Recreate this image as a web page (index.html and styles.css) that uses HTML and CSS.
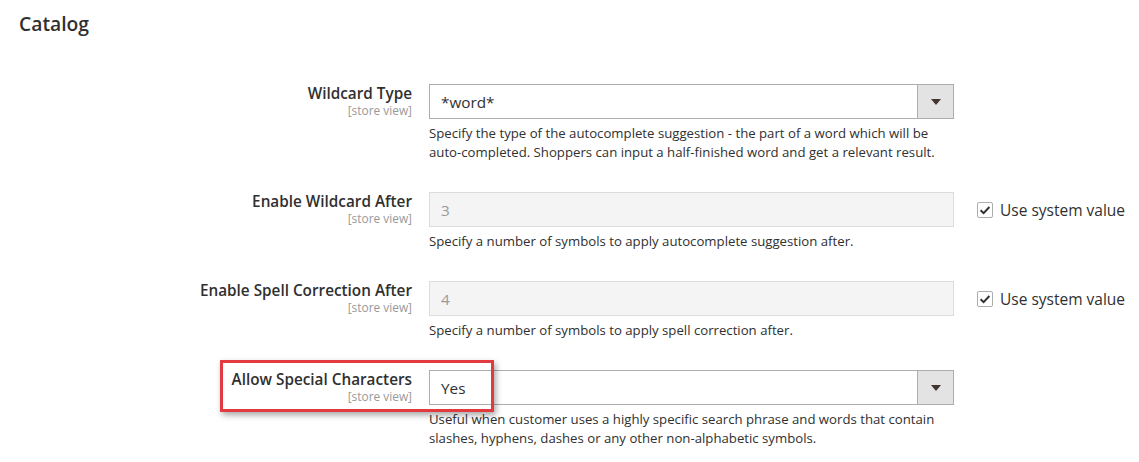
FILE: index.html
```html
<!DOCTYPE html>
<html lang="en">
<head>
<meta charset="utf-8">
<title>Catalog</title>
<link rel="stylesheet" href="styles.css">
</head>
<body>
<div class="page">
  <h2 class="title">Catalog</h2>
  <div class="form">
    <div class="row">
      <div class="label"><span class="name">Wildcard Type</span><span class="scope">[store view]</span></div>
      <div class="control">
        <div class="select"><span class="value">*word*</span><span class="arrow"><span class="tri"></span></span></div>
        <p class="note">Specify the type of the autocomplete suggestion - the part of a word which will be auto-completed. Shoppers can input a half-finished word and get a relevant result.</p>
      </div>
      <div class="extra"></div>
    </div>
    <div class="row">
      <div class="label"><span class="name">Enable Wildcard After</span><span class="scope">[store view]</span></div>
      <div class="control">
        <div class="input disabled"><span class="value">3</span></div>
        <p class="note">Specify a number of symbols to apply autocomplete suggestion after.</p>
      </div>
      <div class="extra">
        <span class="checkbox"><svg viewBox="0 0 16 16" width="16" height="16"><path d="M3.6 8.2 L6.6 11.1 L12.4 5" fill="none" stroke="#303030" stroke-width="2"/></svg></span>
        <span class="sys">Use system value</span>
      </div>
    </div>
    <div class="row">
      <div class="label"><span class="name">Enable Spell Correction After</span><span class="scope">[store view]</span></div>
      <div class="control">
        <div class="input disabled"><span class="value">4</span></div>
        <p class="note">Specify a number of symbols to apply spell correction after.</p>
      </div>
      <div class="extra">
        <span class="checkbox"><svg viewBox="0 0 16 16" width="16" height="16"><path d="M3.6 8.2 L6.6 11.1 L12.4 5" fill="none" stroke="#303030" stroke-width="2"/></svg></span>
        <span class="sys">Use system value</span>
      </div>
    </div>
    <div class="row highlighted">
      <div class="label"><span class="name">Allow Special Characters</span><span class="scope">[store view]</span></div>
      <div class="control">
        <div class="select"><span class="value">Yes</span><span class="arrow"><span class="tri"></span></span></div>
        <p class="note">Useful when customer uses a highly specific search phrase and words that contain slashes, hyphens, dashes or any other non-alphabetic symbols.</p>
      </div>
      <div class="extra"></div>
      <div class="marker"></div>
    </div>
  </div>
</div>
</body>
</html>
```
FILE: styles.css
```css
* { box-sizing: border-box; }
html, body { margin: 0; padding: 0; background: #fff; }
body {
  font-family: "Open Sans", "DejaVu Sans", sans-serif;
  color: #303030;
}
.page { padding-left: 19px; width: 1139px; height: 462px; overflow: hidden; }
.title {
  margin: 12px 0 0 0;
  font-size: 19.3px;
  line-height: 24px;
  font-weight: 600;
  color: #303030;
}
.form { margin-top: 48px; }
.row {
  position: relative;
  display: grid;
  grid-template-columns: 393px 525px auto;
  column-gap: 17px;
  padding-bottom: 30px;
}
.label {
  display: flex;
  flex-direction: column;
  align-items: flex-end;
  text-align: right;
  padding-top: 0px;
}
.name {
  font-size: 15.3px;
  font-weight: 600;
  line-height: 18px;
}
.scope {
  font-size: 11.9px;
  line-height: 16px;
  color: #999;
}
.select, .input {
  height: 35px;
  border: 1px solid #adadad;
  display: flex;
  align-items: center;
  background: #fff;
}
.value {
  flex: 1;
  padding-left: 11px;
  font-size: 15.3px;
  color: #303030;
}
.arrow {
  width: 36px;
  height: 100%;
  background: #e3e3e3;
  border-left: 1px solid #adadad;
  display: flex;
  align-items: center;
  justify-content: center;
}
.tri {
  width: 0; height: 0;
  border-left: 5px solid transparent;
  border-right: 5px solid transparent;
  border-top: 6px solid #41362f;
}
.input.disabled {
  background: #f4f4f4;
  border-color: #dcdcdc;
}
.input.disabled .value { color: #999; }
.note {
  margin: 5px 0 0 0;
  font-size: 13.2px;
  line-height: 19px;
  color: #303030;
}
.extra {
  height: 35px;
  display: flex;
  align-items: center;
  padding-left: 6px;
  gap: 7px;
}
.checkbox {
  width: 16px; height: 16px;
  border: 1px solid #adadad;
  border-radius: 2px;
  background: #fff;
  display: flex;
}
.checkbox svg { display: block; margin: -1px; }
.sys { font-size: 15.5px; color: #303030; }
.marker {
  position: absolute;
  left: 201px;
  top: -10px;
  width: 274px;
  height: 52px;
  border: 3px solid #e23b3f;
  box-shadow: 2px 3px 6px rgba(0,0,0,0.35);
  pointer-events: none;
}
```
